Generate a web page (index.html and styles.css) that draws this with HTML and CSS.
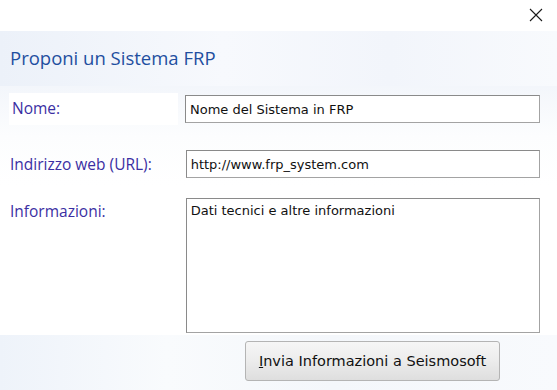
FILE: index.html
```html
<html>
<head>
	<link rel="stylesheet" href="styles.css">
	<title>Proponi un Sistema FRP</title>
</head>
<body>
	<div class="titlebar">
		<svg class="close" width="14" height="14" viewBox="0 0 14 14">
			<path d="M1 1 L13 13 M13 1 L1 13" stroke="#1a1a1a" stroke-width="1.1" fill="none"/>
		</svg>
	</div>
	<div class="header">Proponi un Sistema FRP</div>
	<div class="form">
		<div class="row">
			<div class="label label-box">Nome:</div>
			<input class="field" type="text" value="Nome del Sistema in FRP" />
		</div>
		<div class="row">
			<div class="label">Indirizzo web (URL):</div>
			<input class="field" type="text" value="http://www.frp_system.com" />
		</div>
		<div class="row row-top">
			<div class="label">Informazioni:</div>
			<textarea class="field area">Dati tecnici e altre informazioni</textarea>
		</div>
	</div>
	<div class="footer">
		<button class="btn-send" type="button"><u>I</u>nvia Informazioni a Seismosoft</button>
	</div>
</body>
</html>
```

FILE: styles.css
```css
body {
	margin: 0;
	width: 557px;
	height: 390px;
	overflow: hidden;
	background: #fff;
	font-family: 'Open Sans', sans-serif;
}

.titlebar {
	height: 31px;
	background: #fff;
	display: flex;
	justify-content: flex-end;
	align-items: flex-start;
}

.close {
	margin: 8px 14px 0 0;
}

.header {
	height: 55px;
	padding-left: 10px;
	line-height: 53px;
	font-size: 18.5px;
	color: #1f4fa0;
	background: linear-gradient(90deg, #ecf1f9 0%, #f7f9fd 40%, #f2f5fb 70%, #f8fafd 100%);
}

.form {
	height: 249px;
	padding: 7px 17px 0 9px;
	box-sizing: border-box;
	background: linear-gradient(180deg, #f3f6fb 0%, #fcfdfe 20%, #fff 40%);
}

.row {
	display: flex;
	align-items: center;
	height: 32px;
	margin-bottom: 23px;
}

.row-top {
	align-items: flex-start;
	margin-bottom: 0;
	margin-top: -5px;
}

.label {
	width: 176px;
	padding-left: 1px;
	font-size: 15.5px;
	color: #3b2fa3;
}

.label-box {
	background: #fff;
	width: 166px;
	padding-left: 3px;
	height: 32px;
	line-height: 31px;
	margin-right: 7px;
}

.row-top .label {
	padding-top: 2px;
}

.field {
	width: 355px;
	height: 28px;
	box-sizing: border-box;
	border: 1px solid #a3a3a3;
	border-top-color: #8a8a8a;
	border-left-color: #8a8a8a;
	padding: 0 4px;
	font-family: 'DejaVu Sans', sans-serif;
	font-size: 13px;
	color: #111;
	background: #fff;
	outline: none;
}

.area {
	height: 135px;
	resize: none;
	padding-top: 4px;
}

.footer {
	height: 55px;
	background: linear-gradient(90deg, #eef3fa 0%, #f9fbfd 30%, #f4f7fb 60%, #f8fafd 100%);
	display: flex;
	justify-content: flex-start;
	padding-left: 245px;
	padding-top: 6px;
	box-sizing: border-box;
}

.btn-send {
	width: 255px;
	height: 40px;
	border: 1px solid #b4b4b4;
	border-radius: 3px;
	background: linear-gradient(180deg, #f6f6f6 0%, #ececec 50%, #dedede 100%);
	font-family: 'DejaVu Sans', sans-serif;
	font-size: 14.5px;
	color: #111;
	padding: 0;
}
```
